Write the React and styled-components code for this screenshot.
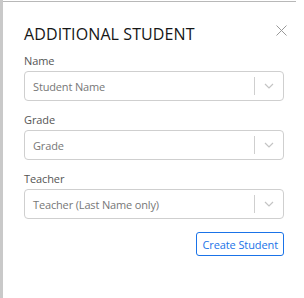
import React from "react";
import styled, { createGlobalStyle } from "styled-components";

const Global = createGlobalStyle`
  html, body { margin: 0; padding: 0; background: #fff; }
  body { font-family: "Open Sans", "Noto Sans", sans-serif; }
`;

const Frame = styled.div`
  width: 304px;
  height: 298px;
  box-sizing: border-box;
  display: flex;
  background: #fff;
`;

const SideBar = styled.div`
  width: 3px;
  flex: none;
  background: #c9c9c9;
`;

const Panel = styled.div`
  width: 293px;
  border-top: 1px solid #b8b8b8;
  margin-top: 1px;
  box-sizing: border-box;
  padding: 20px 0 0 21px;
  display: flex;
  flex-direction: column;
`;

const Header = styled.div`
  width: 263px;
  display: flex;
  justify-content: space-between;
  align-items: flex-start;
  margin-bottom: 8px;
`;

const Title = styled.h2`
  margin: 0;
  font-size: 16px;
  font-weight: 500;
  color: #161616;
  line-height: 24px;
  letter-spacing: 0.1px;
`;

const Close = styled.button`
  border: none;
  background: none;
  padding: 0;
  margin: 3px 0 0 0;
  width: 11px;
  height: 11px;
  display: flex;
  cursor: pointer;
`;

const Field = styled.div`
  display: flex;
  flex-direction: column;
  margin-bottom: 12px;
  width: 260px;
`;

const Label = styled.label`
  font-size: 11px;
  color: #555;
  line-height: 14px;
  margin-bottom: 3px;
  letter-spacing: -0.1px;
`;

const SelectBox = styled.div`
  height: 30px;
  box-sizing: border-box;
  border: 1px solid #cfcfcf;
  border-radius: 4px;
  display: flex;
  align-items: center;
`;

const Placeholder = styled.span`
  flex: 1;
  padding-left: 8px;
  font-size: 11px;
  color: #777;
  letter-spacing: -0.15px;
`;

const Sep = styled.span`
  width: 1px;
  height: 18px;
  background: #cfcfcf;
`;

const Arrow = styled.span`
  width: 28px;
  display: flex;
  justify-content: center;
  align-items: center;
`;

const Actions = styled.div`
  width: 260px;
  display: flex;
  justify-content: flex-end;
  margin-top: 1px;
`;

const Button = styled.button`
  font-family: inherit;
  font-size: 11px;
  letter-spacing: -0.1px;
  color: #1a73e8;
  background: #fff;
  border: 1px solid #1a73e8;
  border-radius: 3px;
  height: 24px;
  padding: 0 5px;
  cursor: pointer;
`;

const Chevron = () => (
  <svg width="10" height="6" viewBox="0 0 10 6">
    <path d="M1 1l4 4 4-4" fill="none" stroke="#c4c4c4" strokeWidth="1.2" />
  </svg>
);

const Select = ({ label, placeholder }) => (
  <Field>
    <Label>{label}</Label>
    <SelectBox>
      <Placeholder>{placeholder}</Placeholder>
      <Sep />
      <Arrow>
        <Chevron />
      </Arrow>
    </SelectBox>
  </Field>
);

export default function App() {
  return (
    <>
      <Global />
      <Frame>
        <SideBar />
        <Panel>
          <Header>
            <Title>ADDITIONAL STUDENT</Title>
            <Close aria-label="close">
              <svg width="11" height="11" viewBox="0 0 11 11">
                <path d="M0.5 0.5l10 10M10.5 0.5l-10 10" stroke="#999" strokeWidth="1" />
              </svg>
            </Close>
          </Header>
          <Select label="Name" placeholder="Student Name" />
          <Select label="Grade" placeholder="Grade" />
          <Select label="Teacher" placeholder="Teacher (Last Name only)" />
          <Actions>
            <Button>Create Student</Button>
          </Actions>
        </Panel>
      </Frame>
    </>
  );
}
